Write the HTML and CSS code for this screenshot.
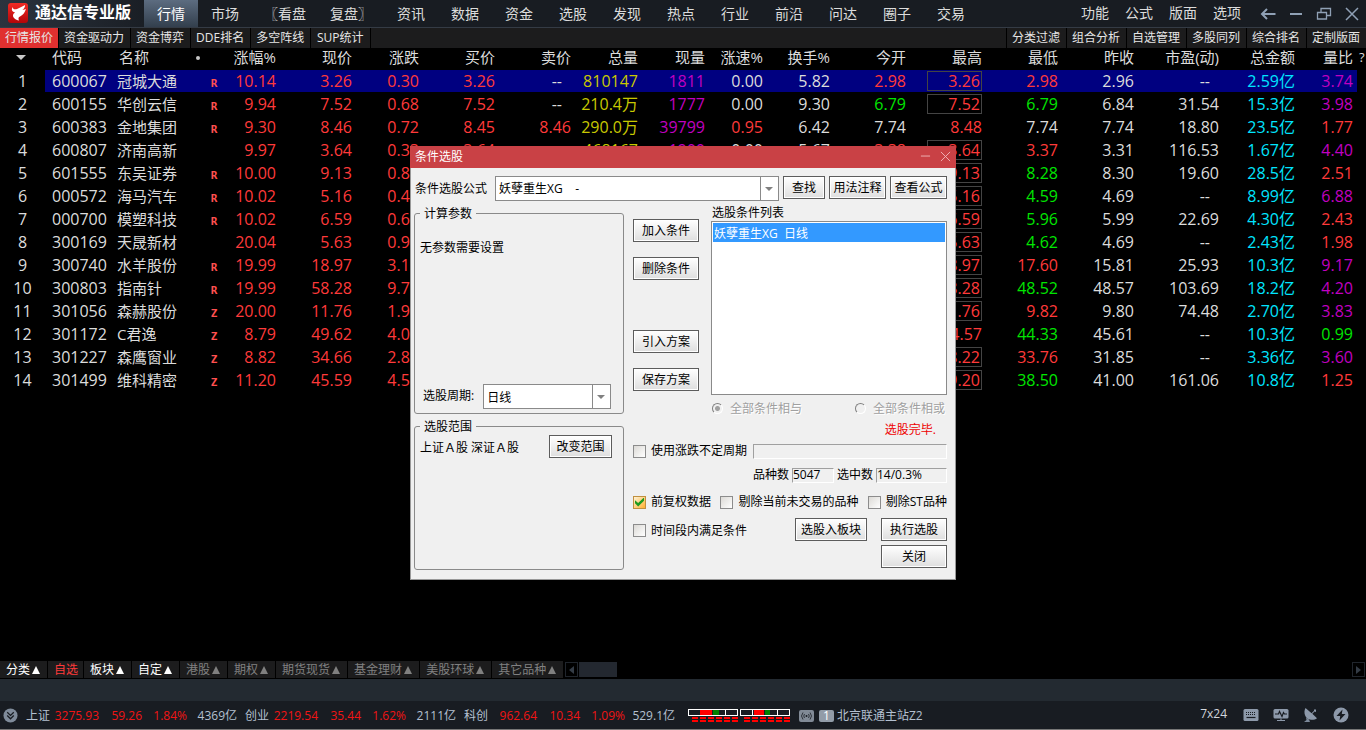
FILE: index.html
```
<!DOCTYPE html>
<html lang="zh-CN">
<head>
    <meta charset="UTF-8">
    <meta name="viewport" content="width=device-width, initial-scale=1.0">
    <title>通达信专业版</title>
    <link rel="stylesheet" href="styles.css">
</head>
<body>
    <!-- Title bar -->
    <header class="topbar">
        <div class="brand">
            <svg class="logo" viewBox="0 0 20 20">
                <defs>
                    <linearGradient id="logoRed" x1="0" y1="0" x2="0" y2="1">
                        <stop offset="0" stop-color="#f02a24"/>
                        <stop offset="1" stop-color="#b30508"/>
                    </linearGradient>
                </defs>
                <rect width="20" height="20" rx="3" fill="url(#logoRed)"/>
                <path d="M5 4C4.500 6 6.500 6.800 9 6C12 5 14.500 3 17 2C17.200 4 16 5.800 14.400 7C16 6.800 17 6.400 18 5.800C17 9.500 15 12 12.400 13.200C10.400 14 10 15.200 11 17.400C7.400 17 4.800 14.600 5 12.200C5.200 10.600 6.200 9.800 7.200 9.400C4.400 9.200 2.600 6.600 5 4Z" fill="#fff"/>
            </svg>
            <span>通达信专业版</span>
        </div>
        <nav class="menu">
            <a href="#" class="active">行情</a>
            <a href="#">市场</a>
            <a href="#">〖看盘</a>
            <a href="#">复盘〗</a>
            <a href="#">资讯</a>
            <a href="#">数据</a>
            <a href="#">资金</a>
            <a href="#">选股</a>
            <a href="#">发现</a>
            <a href="#">热点</a>
            <a href="#">行业</a>
            <a href="#">前沿</a>
            <a href="#">问达</a>
            <a href="#">圈子</a>
            <a href="#">交易</a>
        </nav>
        <nav class="tools">
            <a href="#">功能</a>
            <a href="#">公式</a>
            <a href="#">版面</a>
            <a href="#">选项</a>
        </nav>
        <div class="window-buttons">
            <button type="button" aria-label="返回"><svg viewBox="0 0 16 14"><path d="M15.500 7H2M7 2L2 7l5 5" stroke-width="2"/></svg></button>
            <button type="button" aria-label="最小化"><svg viewBox="0 0 16 14"><path d="M2 7h12" stroke-width="2"/></svg></button>
            <button type="button" aria-label="还原"><svg viewBox="0 0 16 14"><path d="M5 5V1.500h9.500v7H11M1.500 5.500h9v6.500h-9z" stroke-width="1.300"/></svg></button>
            <button type="button" aria-label="关闭"><svg viewBox="0 0 16 14"><path d="M2 1l12 12M14 1L2 13" stroke-width="1.500"/></svg></button>
        </div>
    </header>

    <nav class="subbar">
        <a href="#" class="active">行情报价</a>
        <a href="#">资金驱动力</a>
        <a href="#">资金博弈</a>
        <a href="#">DDE排名</a>
        <a href="#">多空阵线</a>
        <a href="#">SUP统计</a>
        <span class="spacer"></span>
        <a href="#">分类过滤</a>
        <a href="#">组合分析</a>
        <a href="#">自选管理</a>
        <a href="#">多股同列</a>
        <a href="#">综合排名</a>
        <a href="#">定制版面</a>
    </nav>

    <!-- Quotes -->
    <main class="quotes">
        <table>
            <colgroup>
                <col class="w45"><col class="w68"><col class="w91"><col class="w20"><col class="w56">
                <col class="w76"><col class="w67"><col class="w76"><col class="w76"><col class="w67">
                <col class="w67"><col class="w58"><col class="w67"><col class="w76"><col class="w76">
                <col class="w76"><col class="w76"><col class="w85"><col class="w76"><col class="w58"><col>
            </colgroup>
            <thead>
                <tr><th class="no"><i class="sort"></i></th><th class="code">代码</th><th class="name">名称<i class="dot"></i></th><th></th><th>涨幅%</th><th>现价</th><th>涨跌</th><th>买价</th><th>卖价</th><th>总量</th><th>现量</th><th>涨速%</th><th>换手%</th><th>今开</th><th>最高</th><th>最低</th><th>昨收</th><th>市盈(动)</th><th>总金额</th><th>量比</th><th class="more">?</th></tr>
            </thead>
            <tbody>
                <tr class="selected"><td class="no">1</td><td class="code">600067</td><td class="name">冠城大通</td><td class="mark">R</td><td class="r">10.14</td><td class="r">3.26</td><td class="r">0.30</td><td class="r">3.26</td><td class="dash">--</td><td class="y">810147</td><td class="m">1811</td><td>0.00</td><td>5.82</td><td class="r">2.98</td><td class="r"><span class="box">3.26</span></td><td class="r">2.98</td><td>2.96</td><td class="dash">--</td><td class="c">2.59亿</td><td class="m">3.74</td><td class="end"></td></tr>
                <tr><td class="no">2</td><td class="code">600155</td><td class="name">华创云信</td><td class="mark">R</td><td class="r">9.94</td><td class="r">7.52</td><td class="r">0.68</td><td class="r">7.52</td><td class="dash">--</td><td class="y">210.4万</td><td class="m">1777</td><td>0.00</td><td>9.30</td><td class="g">6.79</td><td class="r"><span class="box">7.52</span></td><td class="g">6.79</td><td>6.84</td><td>31.54</td><td class="c">15.3亿</td><td class="m">3.98</td><td class="end"></td></tr>
                <tr><td class="no">3</td><td class="code">600383</td><td class="name">金地集团</td><td class="mark">R</td><td class="r">9.30</td><td class="r">8.46</td><td class="r">0.72</td><td class="r">8.45</td><td class="r">8.46</td><td class="y">290.0万</td><td class="m">39799</td><td class="r">0.95</td><td>6.42</td><td>7.74</td><td class="r">8.48</td><td>7.74</td><td>7.74</td><td>18.80</td><td class="c">23.5亿</td><td class="r">1.77</td><td class="end"></td></tr>
                <tr><td class="no">4</td><td class="code">600807</td><td class="name">济南高新</td><td class="mark"></td><td class="r">9.97</td><td class="r">3.64</td><td class="r">0.33</td><td class="r">3.64</td><td class="dash">--</td><td class="y">468167</td><td class="m">1900</td><td>0.00</td><td>5.67</td><td class="r">3.38</td><td class="r"><span class="box">3.64</span></td><td class="r">3.37</td><td>3.31</td><td>116.53</td><td class="c">1.67亿</td><td class="m">4.40</td><td class="end"></td></tr>
                <tr><td class="no">5</td><td class="code">601555</td><td class="name">东吴证券</td><td class="mark">R</td><td class="r">10.00</td><td class="r">9.13</td><td class="r">0.83</td><td colspan="7"></td><td class="r"><span class="box">9.13</span></td><td class="g">8.28</td><td>8.30</td><td>19.60</td><td class="c">28.5亿</td><td class="r">2.51</td><td class="end"></td></tr>
                <tr><td class="no">6</td><td class="code">000572</td><td class="name">海马汽车</td><td class="mark">R</td><td class="r">10.02</td><td class="r">5.16</td><td class="r">0.47</td><td colspan="7"></td><td class="r"><span class="box">5.16</span></td><td class="g">4.59</td><td>4.69</td><td class="dash">--</td><td class="c">8.99亿</td><td class="m">6.88</td><td class="end"></td></tr>
                <tr><td class="no">7</td><td class="code">000700</td><td class="name">模塑科技</td><td class="mark">R</td><td class="r">10.02</td><td class="r">6.59</td><td class="r">0.60</td><td colspan="7"></td><td class="r"><span class="box">6.59</span></td><td class="g">5.96</td><td>5.99</td><td>22.69</td><td class="c">4.30亿</td><td class="r">2.43</td><td class="end"></td></tr>
                <tr><td class="no">8</td><td class="code">300169</td><td class="name">天晟新材</td><td class="mark"></td><td class="r">20.04</td><td class="r">5.63</td><td class="r">0.94</td><td colspan="7"></td><td class="r"><span class="box">5.63</span></td><td class="g">4.62</td><td>4.69</td><td class="dash">--</td><td class="c">2.43亿</td><td class="r">1.98</td><td class="end"></td></tr>
                <tr><td class="no">9</td><td class="code">300740</td><td class="name">水羊股份</td><td class="mark">R</td><td class="r">19.99</td><td class="r">18.97</td><td class="r">3.16</td><td colspan="7"></td><td class="r"><span class="box">18.97</span></td><td class="r">17.60</td><td>15.81</td><td>25.93</td><td class="c">10.3亿</td><td class="m">9.17</td><td class="end"></td></tr>
                <tr><td class="no">10</td><td class="code">300803</td><td class="name">指南针</td><td class="mark">R</td><td class="r">19.99</td><td class="r">58.28</td><td class="r">9.71</td><td colspan="7"></td><td class="r"><span class="box">58.28</span></td><td class="g">48.52</td><td>48.57</td><td>103.69</td><td class="c">18.2亿</td><td class="m">4.20</td><td class="end"></td></tr>
                <tr><td class="no">11</td><td class="code">301056</td><td class="name">森赫股份</td><td class="mark">Z</td><td class="r">20.00</td><td class="r">11.76</td><td class="r">1.96</td><td colspan="7"></td><td class="r"><span class="box">11.76</span></td><td class="r">9.82</td><td>9.80</td><td>74.48</td><td class="c">2.70亿</td><td class="m">3.83</td><td class="end"></td></tr>
                <tr><td class="no">12</td><td class="code">301172</td><td class="name">C君逸</td><td class="mark">Z</td><td class="r">8.79</td><td class="r">49.62</td><td class="r">4.01</td><td colspan="7"></td><td class="r">54.57</td><td class="g">44.33</td><td>45.61</td><td class="dash">--</td><td class="c">10.3亿</td><td class="g">0.99</td><td class="end"></td></tr>
                <tr><td class="no">13</td><td class="code">301227</td><td class="name">森鹰窗业</td><td class="mark">Z</td><td class="r">8.82</td><td class="r">34.66</td><td class="r">2.81</td><td colspan="7"></td><td class="r"><span class="box">38.22</span></td><td class="r">33.76</td><td>31.85</td><td class="dash">--</td><td class="c">3.36亿</td><td class="m">3.60</td><td class="end"></td></tr>
                <tr><td class="no">14</td><td class="code">301499</td><td class="name">维科精密</td><td class="mark">Z</td><td class="r">11.20</td><td class="r">45.59</td><td class="r">4.59</td><td colspan="7"></td><td class="r"><span class="box">49.20</span></td><td class="g">38.50</td><td>41.00</td><td>161.06</td><td class="c">10.8亿</td><td class="r">1.25</td><td class="end"></td></tr>
            </tbody>
        </table>
    </main>

    <!-- Market tabs -->
    <nav class="markets">
        <a href="#" class="on">分类<i></i></a>
        <a href="#" class="current">自选</a>
        <a href="#" class="on">板块<i></i></a>
        <a href="#" class="on">自定<i></i></a>
        <a href="#">港股<i></i></a>
        <a href="#">期权<i></i></a>
        <a href="#">期货现货<i></i></a>
        <a href="#">基金理财<i></i></a>
        <a href="#">美股环球<i></i></a>
        <a href="#">其它品种<i></i></a>
        <button type="button" class="scroll-btn" aria-label="向左"><svg viewBox="0 0 5 8"><path d="M5 0v8L0 4z"/></svg></button>
        <span class="thumb"></span>
        <button type="button" class="scroll-btn right" aria-label="向右"><svg viewBox="0 0 5 8"><path d="M0 0v8l5-4z"/></svg></button>
    </nav>
    <div class="strip"></div>

    <!-- Status bar -->
    <footer class="status">
        <svg class="expand" viewBox="0 0 16 16"><circle cx="8" cy="8" r="7.500" fill="#7f8b9a"/><path d="M4.500 4.500L8 8l3.500-3.500M4.500 8L8 11.500 11.500 8" fill="none" stroke="#181c22" stroke-width="1.300"/></svg>
        <div class="index"><span>上证</span><b>3275.93</b><b>59.26</b><b>1.84%</b><em>4369亿</em></div>
        <div class="index"><span>创业</span><b>2219.54</b><b>35.44</b><b>1.62%</b><em>2111亿</em></div>
        <div class="index"><span>科创</span><b>962.64</b><b>10.34</b><b>1.09%</b><em>529.1亿</em></div>
        <svg class="gauges" viewBox="0 0 102 14" shape-rendering="crispEdges">
            <g fill="none" stroke="#fff">
                <path d="M.5.500h49v6H.5zM12.500.500v6M37.500.500v6M52.500.500h49v6h-49zM64.500.500v6M89.500.500v6"/>
            </g>
            <path d="M12 1h12v5H12zM66 1h10v5H66z" fill="#f00"/>
            <path d="M25 1h6v5h-6zM77 1h5v5h-5z" fill="#008000"/>
            <path d="M4 9h46M4 12h46M56 9h46M56 12h46" stroke="#f00" stroke-width="2" stroke-dasharray="6 2"/>
        </svg>
        <svg class="signal" viewBox="0 0 15 12"><rect width="15" height="12" rx="2" fill="#818a96"/><path d="M5.500 4q-1.500 2 0 4M9.500 4q1.500 2 0 4M4 2.500q-3 3.500 0 7M11 2.500q3 3.500 0 7" fill="none" stroke="#181c22" stroke-width=".8"/><circle cx="7.500" cy="6" r="1" fill="#181c22"/></svg>
        <span class="badge">1</span>
        <span class="station">北京联通主站Z2</span>
        <span class="hours">7x24</span>
        <div class="status-icons">
            <svg viewBox="0 0 16 16"><rect x=".5" y="2" width="15" height="12" rx="1.500" fill="#8d99aa"/><path d="M3 5.500h10M3 7.500h10" stroke="#181c22" stroke-dasharray="1 1"/><path d="M3.500 10.500h9" stroke="#181c22" stroke-width="1.200"/></svg>
            <svg viewBox="0 0 16 16"><rect x=".5" y="2" width="15" height="9.500" rx="1.500" fill="#8d99aa"/><path d="M2 7h3.500l1-2.500 2.500 5 1.500-4 1 1.500H14" fill="none" stroke="#181c22" stroke-width="1.200"/><path d="M7.500 11.500h1v1.500H12v1H4v-1h3.500z" fill="#8d99aa"/></svg>
            <svg viewBox="0 0 16 16"><path d="M2.500 1C0 5 2 12.500 8 12.800C10.500 13 12.500 12.500 14 11.200L9.300 6.800 11.600 4.600 13 5V2.500h-2v1.300L8.600 6.200z" fill="#8d99aa"/><path d="M3 10.500L3.500 13 1 15h6l-1-2.500z" fill="#7c899a"/></svg>
            <svg viewBox="0 0 16 16"><circle cx="8" cy="8" r="7.500" fill="#8d99aa"/><path d="M9.500 2.500L3.500 9h3.700L6.500 13.500 12.500 7H8.800z" fill="#181c22"/></svg>
        </div>
    </footer>

    <!-- Stock filter dialog -->
    <div class="overlay">
        <form class="dialog" role="dialog" aria-label="条件选股">
            <div class="dialog-title">
                <span>条件选股</span>
                <button type="button" aria-label="最小化"><svg viewBox="0 0 12 12"><path d="M1 5.500h10"/></svg></button>
                <button type="button" aria-label="关闭"><svg viewBox="0 0 12 12"><path d="M1 1l10 10M11 1L1 11"/></svg></button>
            </div>
            <div class="dialog-body">
                <div class="formula-row">
                    <label for="formula">条件选股公式</label>
                    <div class="combo">
                        <select id="formula"><option>妖孽重生XG&nbsp;&nbsp;&nbsp; -</option></select>
                    </div>
                    <button type="button" class="find">查找</button>
                    <button type="button">用法注释</button>
                    <button type="button">查看公式</button>
                </div>
                <div class="columns">
                    <div class="groups">
                        <fieldset class="params">
                            <legend>计算参数</legend>
                            <p>无参数需要设置</p>
                            <div class="period">
                                <label for="period">选股周期:</label>
                                <div class="combo">
                                    <select id="period"><option>日线</option></select>
                                </div>
                            </div>
                        </fieldset>
                        <fieldset class="range">
                            <legend>选股范围</legend>
                            <p>上证Ａ股 深证Ａ股</p>
                            <button type="button">改变范围</button>
                        </fieldset>
                    </div>
                    <div class="side">
                        <div class="picker">
                            <div class="actions">
                                <button type="button">加入条件</button>
                                <button type="button">删除条件</button>
                                <button type="button" class="import">引入方案</button>
                                <button type="button">保存方案</button>
                            </div>
                            <div class="conditions">
                                <label for="conditions">选股条件列表</label>
                                <select id="conditions" size="8"><option selected>妖孽重生XG&nbsp; 日线</option></select>
                            </div>
                        </div>
                        <div class="logic">
                            <label><input type="radio" name="logic" checked disabled>全部条件相与</label>
                            <label><input type="radio" name="logic" disabled>全部条件相或</label>
                        </div>
                        <div class="done">选股完毕.</div>
                        <div class="line">
                            <label><input type="checkbox">使用涨跌不定周期</label>
                            <input type="text" class="sunken wide" aria-label="周期" readonly>
                        </div>
                        <div class="line counts">
                            <label for="total">品种数</label>
                            <input type="text" class="sunken total" id="total" value="5047" readonly>
                            <label for="picked">选中数</label>
                            <input type="text" class="sunken picked" id="picked" value="14/0.3%" readonly>
                        </div>
                        <div class="line checks">
                            <label><input type="checkbox" checked>前复权数据</label>
                            <label><input type="checkbox">剔除当前未交易的品种</label>
                            <label><input type="checkbox">剔除ST品种</label>
                        </div>
                        <div class="run">
                            <label><input type="checkbox">时间段内满足条件</label>
                            <button type="button" class="block">选股入板块</button>
                            <button type="submit">执行选股</button>
                        </div>
                        <button type="button" class="close">关闭</button>
                    </div>
                </div>
            </div>
        </form>
    </div>
</body>
</html>
```
FILE: styles.css
```
:root {
    --bar: #181c22;
    --panel: #f0f0f0;
    --line: #8a8a8a;
    --red: #ff3a3a;
    --green: #00e600;
    --cyan: #00e5ff;
    --yellow: #c8c800;
    --magenta: #c000c0;
}

* {
    box-sizing: border-box;
}

body {
    margin: 0;
    min-height: 100vh;
    display: flex;
    flex-direction: column;
    background: #000;
    color: #dcdcdc;
    font: 12px/16px "Open Sans", "Noto Sans CJK SC", sans-serif;
    white-space: nowrap;
    overflow: hidden;
}

a {
    color: inherit;
    text-decoration: none;
}

button, input, select {
    font: inherit;
    color: inherit;
    margin: 0;
}

svg {
    display: block;
    flex: none;
}

/* title bar */
.topbar {
    display: flex;
    height: 28px;
    background: linear-gradient(90deg, #2b333e, var(--bar) 160px);
    border-bottom: 1px solid #343b45;
    font-size: 14px;
    line-height: 28px;
}

.brand {
    display: flex;
    width: 144px;
    padding-left: 8px;
    gap: 7px;
    color: #fff;
    font-size: 16px;
    font-weight: bold;
    line-height: 25px;
}

.logo {
    width: 20px;
    height: 20px;
    margin-top: 3px;
}

.menu {
    display: flex;
    flex: 1;
}

.menu a {
    height: 27px;
    min-width: 54px;
    padding: 0 12px;
    text-align: center;
}

.menu a.active {
    color: #fff;
    background: linear-gradient(#5c6c80, #333f4d);
}

.tools {
    display: flex;
    gap: 16px;
    margin-right: 19px;
    line-height: 26px;
}

.window-buttons {
    display: flex;
    align-items: center;
    gap: 12px;
    padding-right: 6px;
}

.window-buttons button {
    width: 16px;
    padding: 0;
    border: none;
    background: none;
}

.window-buttons svg {
    width: 16px;
    height: 14px;
    fill: none;
    stroke: #8fa0b5;
}

.subbar {
    display: flex;
    height: 20px;
    background: #1c1c1d;
    color: #e6e6e6;
    line-height: 20px;
}

.subbar a {
    min-width: 60px;
    padding: 0 6px 0 5px;
    text-align: center;
    border-right: 1px solid #000;
}

.subbar a.active {
    min-width: 59px;
    padding: 0 5px;
    background: #e0302f;
}

.subbar .spacer {
    flex: 1;
    border-right: 1px solid #000;
}

.subbar a:last-child {
    min-width: 59px;
    border-right: none;
}

/* quotes table */
.quotes {
    flex: 1;
}

.quotes table {
    width: 100%;
    table-layout: fixed;
    border-spacing: 0;
    font-size: 16px;
    line-height: 22px;
}

.w20 { width: 20px; }
.w45 { width: 45px; }
.w56 { width: 56px; }
.w58 { width: 58px; }
.w67 { width: 67px; }
.w68 { width: 68px; }
.w76 { width: 76px; }
.w85 { width: 85px; }
.w91 { width: 91px; }

.quotes th,
.quotes td {
    height: 23px;
    padding: 0 4px 0 0;
    text-align: right;
    border-bottom: 1px solid #000;
}

.quotes th {
    height: 22px;
    padding-bottom: 4px;
    font-size: 15px;
    font-weight: normal;
    line-height: 18px;
    border: none;
}

.quotes .no {
    padding-right: 0;
    text-align: center;
    background: #000;
}

.quotes th.no {
    padding-right: 4px;
}

.quotes .code {
    padding-left: 7px;
    text-align: left;
}

.quotes .name {
    padding-left: 4px;
    text-align: left;
    font-size: 15px;
    line-height: 20px;
}

.quotes th.name {
    padding-left: 6px;
    line-height: 18px;
}

.quotes .mark {
    padding: 6px 0 0;
    text-align: center;
    color: #ff5050;
    font: bold 11px/16px "DejaVu Sans Mono", monospace;
}

.quotes .more {
    padding: 0 0 4px 2px;
    text-align: left;
    font-size: 13px;
}

.quotes .end {
    padding: 0;
    background: #000;
}

.quotes .dash {
    padding-right: 13px;
}

.selected td {
    background: #000080;
}

.sort {
    display: inline-block;
    border: 5px solid transparent;
    border-top-color: #c8c8c8;
    border-bottom: none;
    vertical-align: 3px;
}

.dot {
    display: inline-block;
    width: 4px;
    height: 4px;
    margin-left: 47px;
    border-radius: 50%;
    background: #c8c8c8;
    vertical-align: 3px;
}

.box {
    display: block;
    width: 55px;
    height: 20px;
    margin-left: auto;
    padding-right: 1px;
    border: 1px solid #444;
    line-height: 18px;
}

.r { color: var(--red); }
.g { color: var(--green); }
.c { color: var(--cyan); }
.y { color: var(--yellow); }
.m { color: var(--magenta); }

/* market tabs */
.markets {
    display: flex;
    height: 18px;
    border-bottom: 1px solid #000;
    color: #808080;
}

.markets a {
    display: flex;
    align-items: center;
    gap: 2px;
    padding: 0 7px 0 6px;
    background: #1c1c1d;
    border-right: 1px solid #000;
    line-height: 17px;
}

.markets a.on {
    color: #fff;
}

.markets a.current {
    padding-right: 5px;
    color: var(--red);
}

.markets i {
    border: 4px solid transparent;
    border-top: none;
    border-bottom: 8px solid currentColor;
}

.scroll-btn {
    width: 13px;
    height: 15px;
    margin: 1px 1px 0 1px;
    padding: 0 3px;
    border: 1px solid #20252c;
    background: #000;
}

.scroll-btn svg {
    width: 5px;
    height: 8px;
    fill: #343c46;
}

.scroll-btn.right {
    margin-left: auto;
}

.thumb {
    width: 38px;
    height: 15px;
    margin-top: 1px;
    background: #232830;
}

.strip {
    height: 22px;
    background: #232a31;
}

/* status bar */
.status {
    display: flex;
    align-items: center;
    height: 29px;
    padding: 1px 17px 0 3px;
    background: var(--bar);
    border-bottom: 1px solid #777;
    color: #b4c0d0;
}

.expand {
    width: 15px;
    height: 15px;
    margin-right: 8px;
}

.index {
    display: grid;
    grid-template-columns: 28px 45px 43px 45px 50px;
    margin-right: 8px;
    text-align: right;
}

.index span {
    text-align: left;
}

.index b {
    color: #f01414;
    font-weight: normal;
}

.index em {
    font-style: normal;
}

.gauges {
    width: 102px;
    height: 14px;
    margin-left: 5px;
}

.signal {
    width: 15px;
    height: 12px;
    margin: 0 5px 0 9px;
}

.badge {
    width: 15px;
    height: 12px;
    margin-right: 3px;
    border-radius: 2px;
    background: #929ca8;
    color: #fff;
    line-height: 12px;
    text-align: center;
}

.station {
    flex: 1;
}

.hours {
    margin: 0 16px 4px 0;
    color: #d2d6dc;
}

.status-icons {
    display: flex;
    gap: 14px;
    margin-bottom: 2px;
}

.status-icons svg {
    width: 16px;
    height: 16px;
}

/* dialog */
.overlay {
    position: fixed;
    inset: 0;
    display: flex;
    align-items: center;
    justify-content: center;
    padding-bottom: 4px;
}

.dialog {
    width: 546px;
    background: var(--panel);
    border: 1px solid #999;
    border-top: none;
    color: #000;
}

.dialog-title {
    display: flex;
    height: 22px;
    margin: 0 -1px;
    padding: 0 4px 0 5px;
    gap: 8px;
    background: #c94145;
    color: #fff;
    line-height: 22px;
}

.dialog-title span {
    flex: 1;
}

.dialog-title button {
    width: 12px;
    padding: 0;
    border: none;
    background: none;
}

.dialog-title svg {
    width: 11px;
    height: 11px;
    margin-bottom: 2px;
    fill: none;
    stroke: #f0b8ba;
}

.dialog-body {
    padding: 8px 8px 9px 3px;
}

.dialog-body button {
    width: 66px;
    height: 23px;
    padding: 0;
    border: 1px solid #5c5c5c;
    box-shadow: inset 0 0 0 1px #fff;
    background: linear-gradient(#fff, #dedede);
    line-height: 21px;
}

.formula-row {
    display: flex;
    gap: 4px;
    height: 25px;
    margin-bottom: 4px;
}

.formula-row label {
    width: 77px;
    padding-left: 1px;
    line-height: 25px;
}

.formula-row .combo {
    flex: 1;
}

.formula-row button {
    width: 57px;
}

.formula-row .find {
    width: 42px;
}

.combo {
    position: relative;
    height: 25px;
}

.combo select {
    width: 100%;
    height: 25px;
    padding: 1px 3px 0;
    border: 1px solid var(--line);
    border-radius: 0;
    appearance: none;
    background: #fff;
}

.combo::before {
    content: "";
    position: absolute;
    top: 1px;
    bottom: 1px;
    right: 18px;
    border-left: 1px solid var(--line);
}

.combo::after {
    content: "";
    position: absolute;
    top: 11px;
    right: 6px;
    border: 4px solid transparent;
    border-top-color: #808080;
    border-bottom: none;
}

.columns {
    display: flex;
    gap: 9px;
}

.groups {
    width: 210px;
    margin-top: -1px;
}

fieldset {
    margin: 0;
    padding: 0 5px;
    border: 1px solid var(--line);
    border-radius: 3px;
}

legend {
    padding: 2px 4px 0;
}

fieldset p {
    margin: 0;
}

.params {
    display: flex;
    flex-direction: column;
    justify-content: space-between;
    height: 210px;
    margin-bottom: 3px;
}

.params p {
    margin-top: 18px;
}

.period {
    display: flex;
    gap: 9px;
    margin-bottom: 4px;
    padding: 0 7px 0 3px;
    line-height: 24px;
}

.period .combo {
    flex: 1;
}

.range {
    display: flex;
    justify-content: space-between;
    height: 153px;
    padding-right: 11px;
}

.range p {
    margin-top: 5px;
}

.range button {
    width: 63px;
}

.side {
    flex: 1;
}

.picker {
    display: flex;
    gap: 12px;
}

.actions {
    display: flex;
    flex-direction: column;
    gap: 15px;
    padding-top: 14px;
}

.actions .import {
    margin-top: 35px;
}

.conditions {
    flex: 1;
}

.conditions select {
    display: block;
    width: 100%;
    height: 174px;
    padding: 1px;
    border: 1px solid var(--line);
    border-radius: 0;
    background: #fff;
    overflow: hidden;
    outline: none;
}

.conditions option {
    height: 19px;
    min-height: 19px;
    padding: 1px 1px 0;
    line-height: 19px;
}

.conditions option:checked {
    background: #3399ff linear-gradient(#3399ff, #3399ff);
    color: #fff;
    -webkit-text-fill-color: #fff;
}

.logic {
    display: flex;
    justify-content: space-between;
    padding: 6px 2px 0 78px;
    color: #a0a0a0;
    text-shadow: 1px 1px #fff;
}

.done {
    margin: 4px 11px 5px;
    color: #e00;
    line-height: 17px;
    text-align: right;
}

.side label {
    display: flex;
    align-items: center;
}

.side .conditions label {
    display: block;
    padding-left: 1px;
}

input[type="radio"] {
    appearance: none;
    width: 11px;
    height: 11px;
    margin: 0 7px 2px 1px;
    border: 1px solid #808080;
    border-color: #808080 #fff #fff #808080;
    border-radius: 50%;
}

input[type="radio"]:checked {
    background: radial-gradient(#a0a0a0 2px, transparent 3px);
}

input[type="checkbox"] {
    appearance: none;
    width: 13px;
    height: 13px;
    margin-right: 5px;
    border: 1px solid #8c8c8c;
    background: linear-gradient(135deg, #dcdad6, #fff);
}

input[type="checkbox"]:checked {
    border-color: #c09040;
    background: linear-gradient(135deg, #fff3d6, #ffb030);
}

input[type="checkbox"]:checked::before {
    content: "";
    display: block;
    width: 9px;
    height: 9px;
    margin: 1px;
    background: #1e9a1e;
    clip-path: polygon(0 30%, 35% 60%, 100% 0, 100% 35%, 35% 100%, 0 65%);
}

.line {
    display: flex;
    align-items: center;
    height: 16px;
}

.sunken {
    width: 42px;
    height: 15px;
    padding: 0;
    border: 1px solid;
    border-color: #a0a0a0 #fff #fff #a0a0a0;
    background: var(--panel);
}

.sunken.wide {
    flex: 1;
    width: 0;
    margin-left: 6px;
}

.counts {
    justify-content: flex-end;
    gap: 3px;
    margin-top: 8px;
}

.counts .picked {
    width: 71px;
}

.checks {
    justify-content: space-between;
    margin-top: 11px;
}

.run {
    display: flex;
    gap: 14px;
    margin-top: 8px;
}

.run label {
    flex: 1;
    padding-top: 2px;
}

.run .block {
    width: 72px;
}

.side .close {
    display: block;
    margin: 4px 0 0 auto;
}
```
